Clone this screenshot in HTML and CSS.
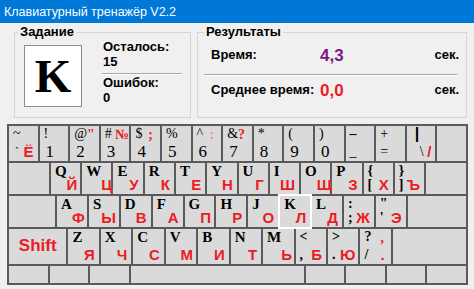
FILE: index.html
```html
<!DOCTYPE html>
<html lang="ru">
<head>
    <meta charset="UTF-8">
    <title>Клавиатурный тренажёр V2.2</title>
    <link rel="stylesheet" href="styles.css">
</head>
<body>
    <div class="titlebar">Клавиатурный тренажёр V2.2</div>

    <div class="panels">
        <fieldset class="group task">
            <legend>Задание</legend>
            <div class="task-body">
                <div class="letter-box">K</div>
                <div class="counters">
                    <div class="label">Осталось:</div>
                    <div class="label">15</div>
                    <div class="sep"></div>
                    <div class="label">Ошибок:</div>
                    <div class="label">0</div>
                </div>
            </div>
        </fieldset>

        <fieldset class="group results">
            <legend>Результаты</legend>
            <div class="result-row first">
                <span class="label name">Время:</span>
                <span class="value purple">4,3</span>
                <span class="label unit">сек.</span>
            </div>
            <div class="sep wide"></div>
            <div class="result-row">
                <span class="label name">Среднее время:</span>
                <span class="value red">0,0</span>
                <span class="label unit">сек.</span>
            </div>
        </fieldset>
    </div>

    <div class="keyboard">
        <div class="row">
            <div class="key"><span class="tl sym">~</span><span class="bl sym small">ˋ</span><span class="br ru">Ё</span></div>
            <div class="key"><span class="tl sym">!</span><span class="bl dig">1</span></div>
            <div class="key"><span class="tl sym">@</span><span class="tr rsym">"</span><span class="bl dig">2</span></div>
            <div class="key"><span class="tl sym">#</span><span class="tr rsym num">№</span><span class="bl dig">3</span></div>
            <div class="key"><span class="tl sym">$</span><span class="tr rsym">;</span><span class="bl dig">4</span></div>
            <div class="key"><span class="tl sym">%</span><span class="bl dig">5</span></div>
            <div class="key"><span class="tl sym">^</span><span class="tr rsym pale">:</span><span class="bl dig">6</span></div>
            <div class="key"><span class="tl sym">&amp;</span><span class="tr rsym">?</span><span class="bl dig">7</span></div>
            <div class="key"><span class="tl sym">*</span><span class="bl dig">8</span></div>
            <div class="key"><span class="tl sym">(</span><span class="bl dig">9</span></div>
            <div class="key"><span class="tl sym">)</span><span class="bl dig">0</span></div>
            <div class="key"><span class="tl sym bold">–</span><span class="bl sym">_</span></div>
            <div class="key"><span class="tl sym">+</span><span class="bl sym">=</span></div>
            <div class="key"><span class="tl sym pipe">|</span><span class="bl sym slash">\</span><span class="br ru">/</span></div>
            <div class="key"></div>
        </div>
        <div class="row">
            <div class="key tab"></div>
            <div class="key"><span class="tl lat">Q</span><span class="br ru">Й</span></div>
            <div class="key"><span class="tl lat">W</span><span class="br ru">Ц</span></div>
            <div class="key"><span class="tl lat">E</span><span class="br ru">У</span></div>
            <div class="key"><span class="tl lat">R</span><span class="br ru">К</span></div>
            <div class="key"><span class="tl lat">T</span><span class="br ru">Е</span></div>
            <div class="key"><span class="tl lat">Y</span><span class="br ru">Н</span></div>
            <div class="key"><span class="tl lat">U</span><span class="br ru">Г</span></div>
            <div class="key"><span class="tl lat">I</span><span class="br ru">Ш</span></div>
            <div class="key"><span class="tl lat">O</span><span class="br ru">Щ</span></div>
            <div class="key"><span class="tl lat">P</span><span class="br ru">З</span></div>
            <div class="key"><span class="tl sym bold">{</span><span class="bl sym bold">[</span><span class="br ru">Х</span></div>
            <div class="key"><span class="tl sym bold">}</span><span class="bl sym bold">]</span><span class="br ru">Ъ</span></div>
            <div class="key tab"></div>
        </div>
        <div class="row">
            <div class="key caps"></div>
            <div class="key"><span class="tl lat">A</span><span class="br ru">Ф</span></div>
            <div class="key"><span class="tl lat">S</span><span class="br ru">Ы</span></div>
            <div class="key"><span class="tl lat">D</span><span class="br ru">В</span></div>
            <div class="key"><span class="tl lat">F</span><span class="br ru">А</span></div>
            <div class="key"><span class="tl lat">G</span><span class="br ru">П</span></div>
            <div class="key"><span class="tl lat">H</span><span class="br ru">Р</span></div>
            <div class="key"><span class="tl lat">J</span><span class="br ru">О</span></div>
            <div class="key active"><span class="tl lat">K</span><span class="br ru">Л</span></div>
            <div class="key"><span class="tl lat">L</span><span class="br ru">Д</span></div>
            <div class="key"><span class="tl sym bold">:</span><span class="bl sym bold">;</span><span class="br ru">Ж</span></div>
            <div class="key"><span class="tl sym bold">"</span><span class="bl sym bold">'</span><span class="br ru">Э</span></div>
            <div class="key enter"></div>
        </div>
        <div class="row">
            <div class="key shift"><span class="shift-label">Shift</span></div>
            <div class="key"><span class="tl lat">Z</span><span class="br ru">Я</span></div>
            <div class="key"><span class="tl lat">X</span><span class="br ru">Ч</span></div>
            <div class="key"><span class="tl lat">C</span><span class="br ru">С</span></div>
            <div class="key"><span class="tl lat">V</span><span class="br ru">М</span></div>
            <div class="key"><span class="tl lat">B</span><span class="br ru">И</span></div>
            <div class="key"><span class="tl lat">N</span><span class="br ru">Т</span></div>
            <div class="key"><span class="tl lat">M</span><span class="br ru">Ь</span></div>
            <div class="key"><span class="tl sym bold">&lt;</span><span class="bl sym bold">,</span><span class="br ru">Б</span></div>
            <div class="key"><span class="tl sym bold">&gt;</span><span class="bl sym bold">.</span><span class="br ru">Ю</span></div>
            <div class="key"><span class="tl sym bold">?</span><span class="tr rsym">,</span><span class="bl sym bold">/</span><span class="br ru">.</span></div>
            <div class="key rshift"></div>
        </div>
        <div class="row">
            <div class="key"></div>
            <div class="key"></div>
            <div class="key"></div>
            <div class="key space"></div>
            <div class="key"></div>
            <div class="key"></div>
            <div class="key"></div>
            <div class="key"></div>
        </div>
    </div>
</body>
</html>
```

FILE: styles.css
```css
* {
    box-sizing: border-box;
    margin: 0;
    padding: 0;
}

body {
    font-family: 'Liberation Sans', Arial, sans-serif;
    background-color: #f0f0f0;
    color: #000;
    width: 474px;
    height: 289px;
    overflow: hidden;
}

.titlebar {
    height: 23px;
    padding: 1px 0 0 4px;
    line-height: 22px;
    font-size: 12.5px;
    color: #fff;
    background-color: #0078d7;
}

.panels {
    display: flex;
    gap: 6px;
    padding: 2px 0 0 14px;
}

.group {
    height: 93px;
    border: 1px solid #d5d5d5;
}

.group legend {
    font-size: 13px;
    font-weight: bold;
    line-height: 14px;
    padding: 0 2px;
}

.task {
    width: 177px;
}

.task legend {
    margin-left: 3px;
}

.results {
    width: 270px;
}

.results legend {
    margin-left: 6px;
}

.label {
    font-size: 13px;
    font-weight: bold;
    line-height: 15px;
}

.task-body {
    display: flex;
    padding-left: 9px;
}

.letter-box {
    width: 58px;
    height: 62px;
    margin-top: 6px;
    border: 1px solid #8c8c8c;
    background: #fff;
    display: flex;
    align-items: center;
    justify-content: center;
    font-family: 'Liberation Serif', 'Times New Roman', serif;
    font-weight: bold;
    font-size: 47px;
    line-height: 1;
}

.counters {
    flex: 1;
    margin: 0 8px 0 21px;
}

.sep {
    height: 2px;
    margin: 4px 0 0 -1px;
    border-top: 1px solid #a9a9a9;
    border-bottom: 1px solid #fff;
}

.sep.wide {
    margin: 11px 9px 0 6px;
}

.result-row {
    display: flex;
    align-items: flex-start;
    padding: 0 7px 0 13px;
    margin-top: 6px;
}

.result-row.first {
    margin-top: 8px;
}

.name {
    width: 109px;
}

.value {
    flex: 1;
    font-size: 17px;
    font-weight: bold;
    line-height: 15px;
    margin-top: 1px;
}

.purple {
    color: #80167f;
}

.red {
    color: #ec1c24;
}

/* keyboard */

.keyboard {
    width: 461px;
    height: 161px;
    margin: 6px 0 0 7px;
    padding: 2px;
    background-color: #5a5a5a;
    display: flex;
    flex-direction: column;
    gap: 2px;
}

.row {
    flex: 1;
    display: flex;
    gap: 2px;
}

.key {
    flex: 1 1 0;
    min-width: 0;
    background-color: #dadada;
    display: grid;
    grid-template-columns: 1fr auto;
    grid-template-rows: 1fr 1fr;
    padding: 1px 4px 2px 4px;
}

.key.tab { flex-grow: 1.5; }
.key.caps { flex-grow: 1.74; }
.key.enter { flex-grow: 2.3; }
.key.shift { flex-grow: 2.2; }
.key.rshift { flex-grow: 2.9; }
.key.space { flex-grow: 5.4; }

.key.active {
    outline: 2px solid #fff;
    position: relative;
}

.tl { grid-column: 1; grid-row: 1; align-self: start; }
.bl { grid-column: 1; grid-row: 2; align-self: end; }
.tr { grid-column: 2; grid-row: 1; align-self: start; }
.br { grid-column: 2; grid-row: 2; align-self: end; }

.lat {
    font-family: 'Liberation Serif', 'Times New Roman', serif;
    font-weight: bold;
    font-size: 15px;
    line-height: 14px;
}

.ru {
    font-size: 15px;
    font-weight: bold;
    line-height: 14px;
    color: #ec1c24;
}

.sym {
    font-family: 'Liberation Serif', 'Times New Roman', serif;
    font-size: 14px;
    line-height: 14px;
}

.sym.bold {
    font-weight: bold;
}

.sym.small {
    font-size: 12px;
    padding-left: 2px;
}

.sym.pipe {
    font-family: 'Liberation Sans', Arial, sans-serif;
    font-weight: bold;
    font-size: 16px;
    padding-left: 4px;
}

.sym.slash {
    padding-left: 9px;
}

.dig {
    font-family: 'Liberation Serif', 'Times New Roman', serif;
    font-size: 17px;
    line-height: 14px;
    padding-left: 2px;
}

.rsym {
    font-family: 'Liberation Serif', 'Times New Roman', serif;
    font-weight: bold;
    font-size: 14px;
    line-height: 16px;
    padding-right: 3px;
    color: #ec1c24;
}

.rsym.num {
    padding-right: 0;
}

.rsym.pale {
    color: #e88a9a;
}

.shift-label {
    grid-column: 1 / 3;
    grid-row: 1 / 3;
    align-self: center;
    justify-self: center;
    font-size: 17px;
    font-weight: bold;
    color: #ec1c24;
}
```
